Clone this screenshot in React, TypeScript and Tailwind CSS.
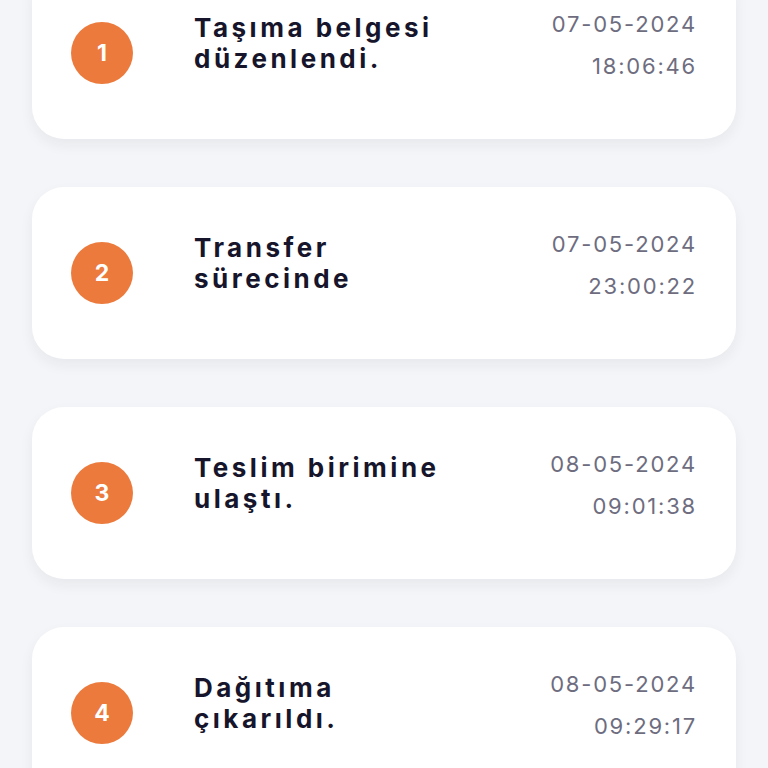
import React from "react";

const items = [
  { n: 1, t1: "Taşıma belgesi", t2: "düzenlendi.", d: "07-05-2024", h: "18:06:46" },
  { n: 2, t1: "Transfer", t2: "sürecinde", d: "07-05-2024", h: "23:00:22" },
  { n: 3, t1: "Teslim birimine", t2: "ulaştı.", d: "08-05-2024", h: "09:01:38" },
  { n: 4, t1: "Dağıtıma", t2: "çıkarıldı.", d: "08-05-2024", h: "09:29:17" },
];

export default function App() {
  return (
    <div className="w-[768px] h-[768px] overflow-hidden bg-[#f4f5f8]" style={{ fontFamily: "Inter, 'Noto Sans', sans-serif" }}>
      <div className="flex flex-col gap-[48px] px-[32px] -mt-[33px]">
        {items.map((it) => (
          <div key={it.n} className="h-[172px] shrink-0 rounded-[32px] bg-white shadow-[0_6px_14px_rgba(30,30,60,0.06)] flex items-start pl-[39px] pr-[41px]">
            <div className="self-center w-[62px] h-[62px] rounded-full bg-[#eb7a3c] flex items-center justify-center text-white text-[23px] font-bold shrink-0">
              {it.n}
            </div>
            <div className="ml-[61px] pt-[45px] flex-1 text-[26px] leading-[31px] font-bold tracking-[3.5px] text-[#16152b]">
              <div>{it.t1}</div>
              <div>{it.t2}</div>
            </div>
            <div className="pt-[36px] text-right text-[22px] leading-[42px] text-[#6e6d80] tracking-[1.8px] -mr-[2px]">
              <div>{it.d}</div>
              <div>{it.h}</div>
            </div>
          </div>
        ))}
      </div>
    </div>
  );
}
